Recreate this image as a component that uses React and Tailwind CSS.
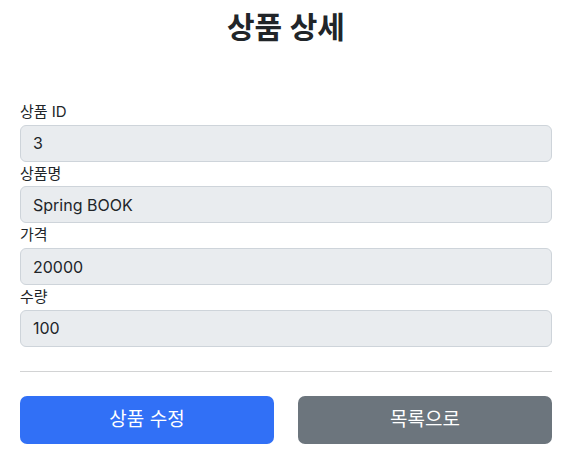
const fields = [
  { label: "상품 ID", value: "3" },
  { label: "상품명", value: "Spring BOOK" },
  { label: "가격", value: "20000" },
  { label: "수량", value: "100" },
];

const App = () => {
  return (
    <div
      className="w-[570px] h-[456px] bg-white text-[#212529] overflow-hidden"
      style={{ fontFamily: 'Inter, "Noto Sans CJK KR", sans-serif' }}
    >
      <div className="pl-[20px] w-[552px]">
        <div className="pt-[9px] text-center">
          <h2 className="text-[30px] leading-[36px] font-semibold">상품 상세</h2>
        </div>

        <form className="mt-[55px]">
          {fields.map((f) => (
            <div key={f.label}>
              <label className="block text-[15px] leading-[24.7px]">
                {f.label}
              </label>
              <input
                readOnly
                value={f.value}
                className="block w-full h-[37px] px-[12px] bg-[#e9ecef] border border-[#ced4da] rounded-[6px] text-[16px] text-[#212529] outline-none"
              />
            </div>
          ))}

          <hr className="my-[24px] border-0 border-t border-[#d2d3d4]" />

          <div className="grid grid-cols-2 gap-[24px]">
            <button
              type="button"
              className="h-[48px] rounded-[7px] bg-[#3170f6] text-white text-[19px]"
            >
              상품 수정
            </button>
            <button
              type="button"
              className="h-[48px] rounded-[7px] bg-[#6c757d] text-white text-[19px]"
            >
              목록으로
            </button>
          </div>
        </form>
      </div>
    </div>
  );
};

export default App;
